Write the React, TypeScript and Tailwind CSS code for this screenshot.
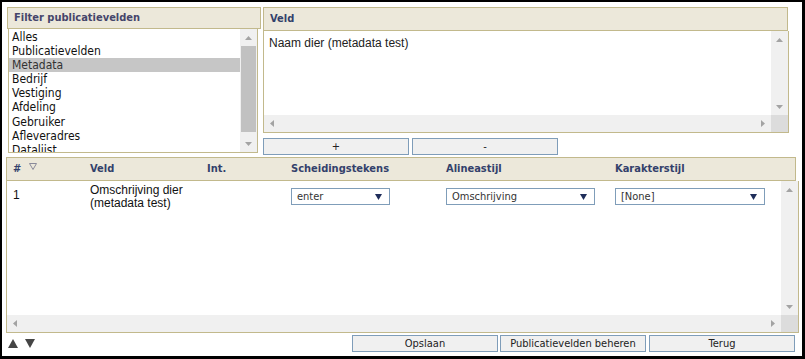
import React from 'react';

const uiFont = { fontFamily: '"DejaVu Sans Condensed", "DejaVu Sans", sans-serif' };
const arialFont = { fontFamily: '"Liberation Sans", Arial, sans-serif' };

type Dir = 'up' | 'down' | 'left' | 'right';

function Tri({ dir, color = '#a3a3a3', size = 7 }: { dir: Dir; color?: string; size?: number }) {
  const pts: Record<Dir, string> = {
    up: '0,4 3.5,0 7,4',
    down: '0,0 7,0 3.5,4',
    left: '4,0 4,7 0,3.5',
    right: '0,0 4,3.5 0,7',
  };
  const vertical = dir === 'up' || dir === 'down';
  return (
    <svg
      width={vertical ? size : (size * 4) / 7}
      height={vertical ? (size * 4) / 7 : size}
      viewBox={vertical ? '0 0 7 4' : '0 0 4 7'}
    >
      <polygon points={pts[dir]} fill={color} />
    </svg>
  );
}

function VBar({ thumb }: { thumb?: boolean }) {
  return (
    <div className="w-[17px] h-full bg-[#f0f0f0] flex flex-col items-center">
      <div className="h-[17px] flex items-center justify-center">
        <Tri dir="up" />
      </div>
      <div className="flex-1 w-full px-[1px]">
        {thumb && <div className="w-full h-[86px] bg-[#c1c1c1]" />}
      </div>
      <div className="h-[17px] flex items-center justify-center">
        <Tri dir="down" />
      </div>
    </div>
  );
}

function HBar() {
  return (
    <div className="flex h-[17px]">
      <div className="flex-1 bg-[#f0f0f0] flex items-center justify-between px-[6px]">
        <Tri dir="left" />
        <Tri dir="right" />
      </div>
      <div className="w-[17px] bg-[#dcdcdc]" />
    </div>
  );
}

function Btn({ label }: { label: string }) {
  return (
    <button className="w-[146px] h-[17px] border border-[#7f9db9] bg-[#f0f0f0] text-[11px] leading-none text-[#222] flex items-center justify-center">
      {label}
    </button>
  );
}

function Select({ value, width }: { value: string; width: string }) {
  return (
    <div className={`${width} h-[17px] border border-[#7f9db9] bg-white flex items-center justify-between pl-[5px] pr-[7px] text-[11px] text-[#333]`}>
      <span>{value}</span>
      <svg width="7" height="6" viewBox="0 0 7 6">
        <polygon points="0,0 7,0 3.5,6" fill="#1f2d5a" />
      </svg>
    </div>
  );
}

const filters = [
  'Alles',
  'Publicatievelden',
  'Metadata',
  'Bedrijf',
  'Vestiging',
  'Afdeling',
  'Gebruiker',
  'Afleveradres',
  'Datalijst',
];

export default function App() {
  return (
    <div
      className="w-[805px] h-[359px] bg-white border-black border-l-2 border-t-2 border-r-[3px] border-b-[3px] pl-[4px] pt-[5px] overflow-hidden"
      style={uiFont}
    >
      {/* Top row */}
      <div className="flex gap-[2px] ml-[1px]">
        {/* Filter list */}
        <div className="w-[254px] flex flex-col">
          <div className="h-[22px] border border-[#c2b98c] bg-[#ece8da] flex items-center pl-[6px] text-[11px] font-bold text-[#45456a]">
            Filter publicatievelden
          </div>
          <div className="ml-[1px] w-[250px] h-[124px] border border-[#c2b98c] border-t-0 flex overflow-hidden">
            <div className="flex-1 pt-[1px] text-[12px] leading-[14.1px] text-[#111]">
              {filters.map((f) => (
                <div key={f} className={`pl-[3px] ${f === 'Metadata' ? 'bg-[#c6c6c6] text-[#333]' : ''}`}>
                  {f}
                </div>
              ))}
            </div>
            <VBar thumb />
          </div>
        </div>

        {/* Veld */}
        <div className="w-[526px] flex flex-col">
          <div className="w-[525px] h-[24px] border border-[#c2b98c] bg-[#ece8da] flex items-center pl-[6px] text-[11px] font-bold text-[#33416b]">
            Veld
          </div>
          <div className="h-[102px] border border-t-0 border-[#c2b98c] flex flex-col">
            <div className="flex flex-1">
              <div className="flex-1 pt-[5px] pl-[5px] text-[12px] leading-[14px] text-[#222]" style={arialFont}>
                Naam dier (metadata test)
              </div>
              <VBar />
            </div>
            <HBar />
          </div>
          <div className="flex gap-[3px] mt-[5px]">
            <Btn label="+" />
            <Btn label="-" />
          </div>
        </div>
      </div>

      {/* Table */}
      <div className="mt-[2px] w-[790px] h-[24px] border border-[#c2b98c] bg-[#ece8da] flex items-center pl-[6px] text-[11px] font-bold text-[#33416b]">
        <div className="w-[77px] flex items-center gap-[8px]">
          <span>#</span>
          <svg width="8" height="7" viewBox="0 0 8 7" className="-translate-y-[3px]">
            <polygon points="0.5,0.5 7.5,0.5 4,6.5" fill="none" stroke="#8a8a9a" strokeWidth="1" />
          </svg>
        </div>
        <div className="w-[117px]">Veld</div>
        <div className="w-[84px]">Int.</div>
        <div className="w-[155px]">Scheidingstekens</div>
        <div className="w-[169px]">Alineastijl</div>
        <div>Karakterstijl</div>
      </div>
      <div className="w-[793px] h-[152px] border border-t-0 border-[#c2b98c] flex flex-col">
        <div className="flex flex-1">
          <div className="flex-1 flex items-start pl-[6px] pt-[3px] text-[12px] leading-[13px] text-[#111]" style={arialFont}>
            <div className="w-[77px] mt-[5px]">1</div>
            <div className="w-[117px]">
              Omschrijving dier
              <br />
              (metadata test)
            </div>
            <div className="w-[84px]" />
            <div className="w-[155px] mt-[4px]" style={uiFont}>
              <Select value="enter" width="w-[99px]" />
            </div>
            <div className="w-[169px] mt-[4px]" style={uiFont}>
              <Select value="Omschrijving" width="w-[149px]" />
            </div>
            <div className="mt-[4px]" style={uiFont}>
              <Select value="[None]" width="w-[150px]" />
            </div>
          </div>
          <VBar />
        </div>
        <HBar />
      </div>

      {/* Bottom bar */}
      <div className="mt-[2px] flex items-center pr-[7px]">
        <div className="flex items-center gap-[7px] ml-[2px]">
          <svg width="10" height="9" viewBox="0 0 10 9">
            <polygon points="0,9 5,0 10,9" fill="#454545" />
          </svg>
          <svg width="10" height="9" viewBox="0 0 10 9">
            <polygon points="0,0 10,0 5,9" fill="#454545" />
          </svg>
        </div>
        <div className="ml-auto flex">
          <Btn label="Opslaan" />
          <div className="ml-[2px]">
            <Btn label="Publicatievelden beheren" />
          </div>
          <div className="ml-[3px]">
            <Btn label="Terug" />
          </div>
        </div>
      </div>
    </div>
  );
}
